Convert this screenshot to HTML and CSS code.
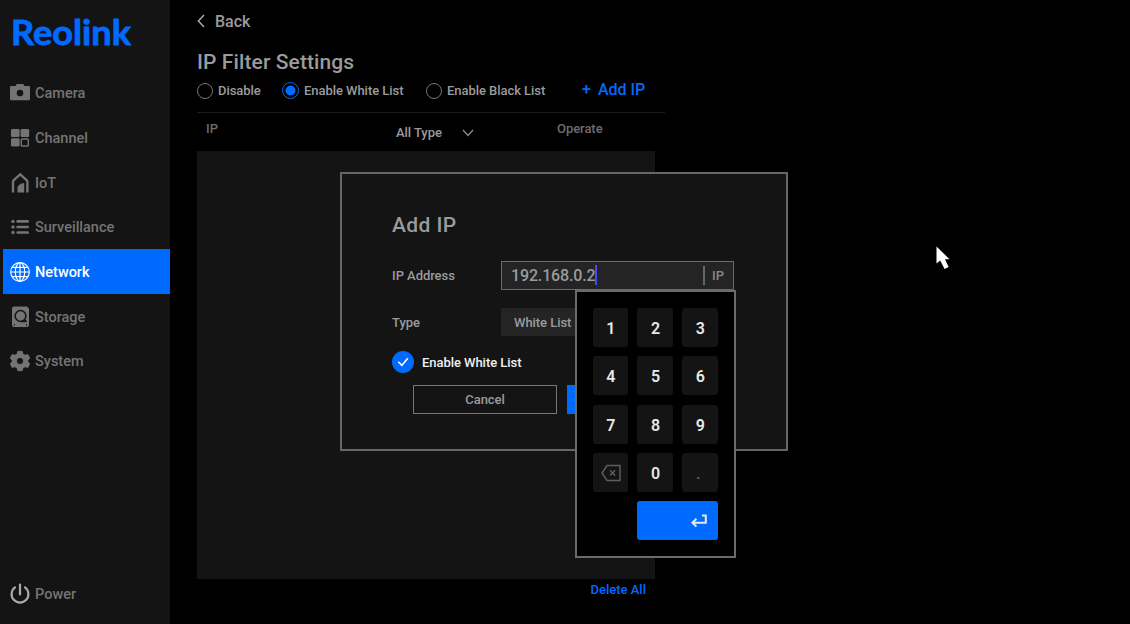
FILE: index.html
```html
<!DOCTYPE html>
<html lang="en">
<head>
    <meta charset="UTF-8">
    <meta name="viewport" content="width=device-width, initial-scale=1.0">
    <title>Reolink: IP Filter Settings</title>
    <link rel="stylesheet" href="styles.css">
</head>
<body>
    <div class="sidebar">
        <svg class="logo" width="122" height="30" viewBox="0 0 122 30">
            <text class="logo-text" x="-1" y="26.5" textLength="120" lengthAdjust="spacingAndGlyphs">Reolink</text>
        </svg>

        <nav class="menu">
            <a class="menu-item">
                <svg class="icon" viewBox="0 0 20 20"><path fill-rule="evenodd" d="M1.2 3H5.5L6.7 1H13.3L14.5 3H18.8Q20 3 20 4.2V16Q20 17.2 18.8 17.2H1.2Q0 17.2 0 16V4.2Q0 3 1.2 3ZM10 6.8A3.3 3.3 0 1 0 10 13.4A3.3 3.3 0 1 0 10 6.8Z"/></svg>
                Camera
            </a>
            <a class="menu-item">
                <svg class="icon" viewBox="0 0 20 20"><rect x="1" y="1" width="8.6" height="8" rx="1.3"/><rect x="10.6" y="1" width="8.6" height="8" rx="1.3"/><rect x="1" y="10.2" width="8.6" height="8.4" rx="1.3"/><rect class="line" x="11.3" y="11" width="7" height="7" rx="0.8" stroke-width="1.4"/></svg>
                Channel
            </a>
            <a class="menu-item">
                <svg class="icon" viewBox="0 0 20 20"><path class="line" stroke-width="2.4" d="M3 19.4V9Q3 7.8 3.8 7L10.2 1.3L16.6 7Q17.4 7.8 17.4 9V19.4"/><path d="M7.5 19.4V14.5Q8.5 10.8 14.2 10V19.4Z"/></svg>
                IoT
            </a>
            <a class="menu-item">
                <svg class="icon" viewBox="0 0 20 20"><circle cx="3" cy="4.4" r="1.7"/><circle cx="3" cy="10" r="1.7"/><circle cx="3" cy="15.5" r="1.7"/><path class="line" stroke-width="2.7" stroke-linecap="round" d="M7.6 4.4H17.7M7.6 10H17.7M7.6 15.5H17.7"/></svg>
                Surveillance
            </a>
            <a class="menu-item active">
                <svg class="icon" viewBox="0 0 20 20"><g class="line" stroke-width="1.2"><circle cx="10" cy="10" r="9.3"/><ellipse cx="10" cy="10" rx="4.7" ry="9.3"/><path d="M10 .7V19.3M.7 10H19.3M2.2 5.3H17.8M2.2 14.7H17.8"/></g></svg>
                Network
            </a>
            <a class="menu-item">
                <svg class="icon" viewBox="0 0 20 20"><path d="M4.2 -.6H17L19 1.5V17.8Q19 20 17 20H3.8Q2 20 2 17.8V1.5Q2 -.6 4.2 -.6Z"/><circle class="cut" cx="10.5" cy="9" r="5.4"/><path class="cut" d="M11.2 14.4H16.6M14 12.2L16.4 14.4"/><path class="cut" d="M4 17.7H5M16 17.7H17"/></svg>
                Storage
            </a>
            <a class="menu-item">
                <svg class="icon" viewBox="0 0 20 20"><path stroke="currentColor" stroke-width="1" stroke-linejoin="round" fill-rule="evenodd" d="M7.9 .3H12.1L12.8 3L15.1 4.3L17.8 3.6L19.7 7.2L17.8 9V11L19.7 12.8L17.8 16.4L15.1 15.7L12.8 17L12.1 19.7H7.9L7.2 17L4.9 15.7L2.2 16.4L.3 12.8L2.2 11V9L.3 7.2L2.2 3.6L4.9 4.3L7.2 3ZM10 6.4A3.6 3.6 0 1 0 10 13.6A3.6 3.6 0 1 0 10 6.4Z"/></svg>
                System
            </a>
        </nav>

        <a class="menu-item power">
            <svg class="icon" viewBox="0 0 20 20"><path class="line" stroke-width="2.2" stroke-linecap="round" d="M10 .5V10.5M5 3.4A8.4 8.4 0 1 0 15 3.4"/></svg>
            Power
        </a>
    </div>

    <div class="content">
        <a class="back">
            <svg class="back-icon" width="8" height="14" viewBox="0 0 8 14"><path d="M7 1L1.4 7L7 13"/></svg>
            Back
        </a>
        <h1>IP Filter Settings</h1>

        <div class="filter-row">
            <label class="radio disable"><span class="dot"></span>Disable</label>
            <label class="radio white"><span class="dot checked"></span>Enable White List</label>
            <label class="radio black"><span class="dot"></span>Enable Black List</label>
            <a class="add-ip"><span class="plus">+</span>Add IP</a>
        </div>

        <div class="table-head">
            <span class="col-ip">IP</span>
            <span class="col-type">All Type
                <svg width="12" height="8" viewBox="0 0 12 8"><path d="M1 1L6 6.5L11 1"/></svg>
            </span>
            <span class="col-operate">Operate</span>
        </div>
        <div class="table-body"></div>
        <a class="delete-all">Delete All</a>
    </div>

    <div class="dialog">
        <h2>Add IP</h2>
        <div class="field">
            <span class="field-label">IP Address</span>
            <div class="ip-input">
                <span class="ip-value">192.168.0.2</span><span class="caret"></span>
                <span class="suffix">IP</span>
            </div>
        </div>
        <div class="field type-field">
            <span class="field-label">Type</span>
            <div class="select">White List</div>
        </div>
        <div class="enable">
            <svg width="22" height="22" viewBox="0 0 22 22"><circle cx="11" cy="11" r="11"/><path d="M6.3 10.8L9.9 14.3L15.8 7.3"/></svg>
            Enable White List
        </div>
        <div class="buttons">
            <div class="button">Cancel</div>
            <div class="button primary"></div>
        </div>
    </div>

    <div class="keypad">
        <div class="key">1</div>
        <div class="key">2</div>
        <div class="key">3</div>
        <div class="key">4</div>
        <div class="key">5</div>
        <div class="key">6</div>
        <div class="key">7</div>
        <div class="key">8</div>
        <div class="key">9</div>
        <div class="key dim">
            <svg width="20" height="18" viewBox="0 0 20 18"><path d="M6 1.5H19V16.5H6L1 9Z"/><path d="M9 6.2L14.2 11.6M14.2 6.2L9 11.6"/></svg>
        </div>
        <div class="key">0</div>
        <div class="key dim point">.</div>
        <div class="key enter">
            <svg width="16" height="14" viewBox="0 0 16 14"><path d="M11 1.4H14.8V8.7H1.5M5.4 4.8L1.4 8.7L5.4 12.6"/></svg>
        </div>
    </div>

    <svg class="cursor" width="16" height="24" viewBox="0 0 16 24"><path d="M1.5 .5V17.5L5.2 14.6L9.6 23L13.6 21L10 13.2H14.5Z"/></svg>
</body>
</html>
```
FILE: styles.css
```css
* {
    box-sizing: border-box;
}

body {
    margin: 0;
    width: 1130px;
    height: 624px;
    display: flex;
    position: relative;
    overflow: hidden;
    background-color: #000;
    color: #9b9b9b;
    font-family: Roboto, 'Liberation Sans', sans-serif;
    font-size: 13px;
    font-weight: 500;
    letter-spacing: -0.05px;
}

h1, h2 {
    margin: 0;
    font-weight: 500;
}

svg {
    display: block;
    flex-shrink: 0;
    overflow: visible;
}

.sidebar {
    width: 170px;
    height: 624px;
    display: flex;
    flex-direction: column;
    background-color: #141414;
}

.logo {
    margin: 18px 0 22.4px 12px;
}

.logo-text {
    font-family: Lato, sans-serif;
    font-size: 34px;
    font-weight: 700;
    letter-spacing: 0;
    fill: #006aff;
    stroke: #006aff;
    stroke-width: 0.8;
}

.menu-item {
    height: 44.67px;
    margin-left: 3px;
    padding: 2px 0 0 7px;
    display: flex;
    align-items: center;
    gap: 5px;
    font-size: 14.5px;
    letter-spacing: 0;
    color: #747474;
}

.menu-item.active {
    background-color: #006aff;
    color: #fff;
}

.icon {
    width: 20px;
    height: 20px;
    margin-top: -1px;
    fill: currentColor;
}

.line {
    fill: none;
    stroke: currentColor;
}

.cut {
    fill: none;
    stroke: #141414;
    stroke-width: 1.5;
}

.power {
    margin-top: auto;
    margin-bottom: 8px;
}

.power .icon {
    color: #aaa;
}

.content {
    padding: 10px 0 0 27px;
}

.back {
    height: 22px;
    display: flex;
    align-items: center;
    gap: 10px;
    font-size: 16px;
}

.back-icon {
    fill: none;
    stroke: #aaa;
    stroke-width: 1.5;
}

h1 {
    margin-top: 16px;
    font-size: 21px;
    line-height: 28px;
    letter-spacing: 0.1px;
}

.filter-row {
    width: 468px;
    height: 37px;
    display: flex;
    align-items: center;
    padding-bottom: 7px;
    border-bottom: 1px solid #1c1c1c;
}

.radio {
    display: flex;
    align-items: center;
    gap: 5px;
}

.disable {
    width: 85px;
}

.white {
    width: 144px;
}

.black {
    width: 156px;
}

.dot {
    width: 16px;
    height: 16px;
    border: 1.5px solid #777;
    border-radius: 50%;
}

.dot.checked {
    width: 17px;
    height: 17px;
    border-color: #006aff;
    background: radial-gradient(circle, #006aff 4.5px, #000 5.3px);
}

.add-ip {
    display: flex;
    align-items: center;
    gap: 7px;
    padding-bottom: 2px;
    font-size: 16px;
    letter-spacing: 0;
    color: #006aff;
}

.table-head {
    height: 38px;
    display: grid;
    grid-template-columns: 199px 161px 1fr;
    line-height: 31px;
    color: #6d6d6d;
}

.col-ip {
    padding-left: 9px;
}

.col-type {
    height: 39px;
    display: flex;
    align-items: center;
    gap: 20px;
    color: #9b9b9b;
}

.col-type svg {
    fill: none;
    stroke: #888;
    stroke-width: 1.4;
}

.table-body {
    width: 458px;
    height: 428px;
    background-color: #141414;
}

.delete-all {
    display: block;
    width: 449px;
    text-align: right;
    line-height: 22px;
    letter-spacing: 0;
    color: #006aff;
}

/* Add IP dialog over the table */
.dialog {
    position: absolute;
    left: 340px;
    top: 172px;
    width: 448px;
    height: 279px;
    padding: 36px 52px 0 50px;
    border: 2px solid #666;
    background-color: #141414;
}

h2 {
    font-size: 21px;
    line-height: 30px;
    letter-spacing: 0.4px;
}

.field {
    height: 30px;
    margin-top: 20px;
    display: flex;
    align-items: center;
}

.type-field {
    margin-top: 17px;
}

.field-label {
    width: 109px;
    padding-top: 1px;
}

.type-field .field-label {
    padding-top: 0;
}

.ip-input {
    width: 233px;
    height: 29px;
    padding: 0 9px;
    display: flex;
    flex-shrink: 0;
    align-items: center;
    border: 1px solid #6a6a6a;
    background-color: #242424;
}

.ip-value {
    padding-top: 1px;
    font-size: 16px;
    letter-spacing: -0.15px;
}

.caret {
    width: 2px;
    height: 20px;
    background-color: #3f4cff;
}

.suffix {
    margin-left: auto;
    padding-left: 7px;
    border-left: 2px solid #666;
    line-height: 19px;
    color: #888;
}

.select {
    width: 233px;
    height: 28px;
    padding-left: 13px;
    flex-shrink: 0;
    line-height: 29px;
    background-color: #242424;
}

.enable {
    margin-top: 14px;
    height: 22px;
    display: flex;
    align-items: center;
    gap: 8px;
    color: #f0f0f0;
}

.enable circle {
    fill: #006aff;
}

.enable path {
    fill: none;
    stroke: #fff;
    stroke-width: 1.6;
}

.buttons {
    margin: 12px 0 0 21px;
    display: flex;
    gap: 10px;
}

.button {
    width: 144px;
    height: 29px;
    border: 1px solid #777;
    text-align: center;
    line-height: 27px;
}

.button.primary {
    border: none;
    background-color: #006aff;
}

/* On-screen keypad, opens under the address input */
.keypad {
    position: absolute;
    left: 575px;
    top: 290px;
    width: 161px;
    height: 268px;
    padding: 16px 16px 0 15.5px;
    display: grid;
    grid-template-columns: repeat(3, 35.7px);
    grid-auto-rows: 39px;
    column-gap: 9px;
    row-gap: 9.3px;
    border: 2px solid #6b6b6b;
    background-color: #000;
}

.key {
    display: flex;
    align-items: center;
    justify-content: center;
    padding: 2px 0 0 1px;
    border-radius: 3px;
    background-color: #141414;
    color: #e8e8e8;
    font-size: 16px;
    font-weight: 600;
}

.key svg {
    fill: none;
    stroke: currentColor;
    stroke-width: 1.4;
}

.key.dim {
    color: #5e5e5e;
}

.key.point {
    padding-right: 4px;
}

.key.enter {
    grid-column: 2 / 4;
    justify-content: flex-end;
    padding: 0 11px 0 0;
    background-color: #006aff;
}

.key.enter svg {
    stroke-width: 2;
}

.cursor {
    position: absolute;
    left: 935px;
    top: 246px;
    fill: #fff;
}
```
